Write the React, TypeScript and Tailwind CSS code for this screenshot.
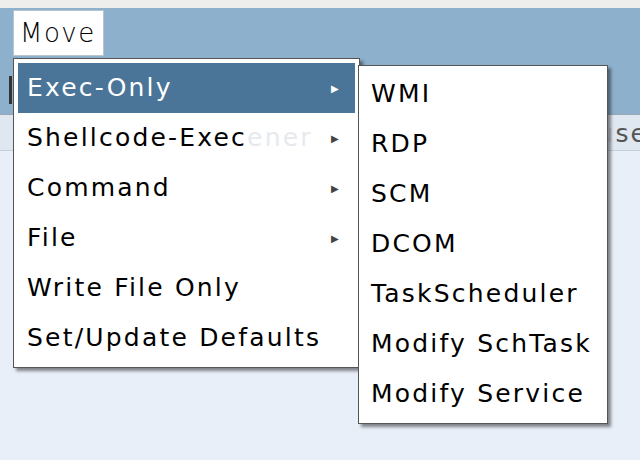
export default function App() {
  const main = ["Exec-Only", "Shellcode-Exec", "Command", "File", "Write File Only", "Set/Update Defaults"];
  const arrows = [true, true, true, true, false, false];
  const sub = ["WMI", "RDP", "SCM", "DCOM", "TaskScheduler", "Modify SchTask", "Modify Service"];
  const f = { fontFamily: '"DejaVu Sans", sans-serif' };
  return (
    <div className="relative w-[640px] h-[460px] overflow-hidden bg-[#e9eff8] text-black flex flex-col" style={f}>
      <div className="h-[8px] bg-[#eeeeec]" />
      <div className="h-[107px] bg-[#8db0cc] border-b border-[#9aa6b0] flex items-end pb-[10px] pl-[9px]">
        <div className="w-[3px] h-[28px] bg-[#333]" />
      </div>
      <div className="h-[36px] bg-[#dfe7f1] border-b border-[#c5d0dc] flex justify-end text-[25px] tracking-[2px]">
        <div className="border-l border-[#cbd4de] pl-[4px] -mr-[8px]">
          <span className="text-[#c8d0d8]">u</span><span className="text-[#555]">se</span>
        </div>
      </div>
      <div className="absolute left-[13px] top-[10px] w-[91px] h-[46px] bg-white border border-[#b8c4cf] text-[26px] leading-[44px] pl-[6px] tracking-[1.5px] font-light">Move</div>
      <div className="absolute left-[13px] top-[58px] w-[347px] h-[310px] bg-white border border-[#555] shadow-[3px_3px_3px_rgba(0,0,0,0.45)] pt-[4px] px-[4px] flex flex-col">
        {main.map((m, i) => (
          <div key={m} className={`h-[50px] flex items-center pl-[9px] pr-[14px] text-[25px] tracking-[2.2px] ${i === 0 ? "bg-[#4a7598] text-white" : ""}`}>
            <span className="flex-1 whitespace-nowrap">
              {m}
              {i === 1 && <span className="text-[#e6eaee]">ener</span>}
            </span>
            {arrows[i] && <span className={`text-[10px] ${i === 0 ? "text-white" : "text-[#444]"}`}>▶</span>}
          </div>
        ))}
      </div>
      <div className="absolute left-[358px] top-[65px] w-[250px] h-[359px] bg-white border border-[#555] shadow-[3px_3px_3px_rgba(0,0,0,0.45)] pt-[3px] flex flex-col">
        {sub.map((s) => (
          <div key={s} className="h-[50px] flex items-center pl-[12px] text-[25px] tracking-[2.2px] whitespace-nowrap">{s}</div>
        ))}
      </div>
    </div>
  );
}
